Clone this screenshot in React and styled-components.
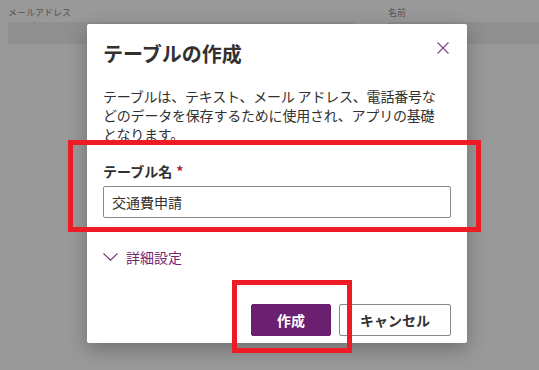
import styled, { createGlobalStyle } from 'styled-components';

const GlobalStyle = createGlobalStyle`
    * {
        box-sizing: border-box;
    }
    body {
        margin: 0;
        background: #999999;
        font-family: 'Noto Sans CJK JP', 'Noto Sans', sans-serif;
    }
`;

const Page = styled.div`
    position: relative;
    width: 539px;
    height: 370px;
    overflow: hidden;
    background: #999999;
`;

const Table = styled.div`
    display: grid;
    grid-template-columns: 346px 1fr;
    column-gap: 34px;
    padding-left: 8px;
`;

const HeaderCell = styled.div`
    height: 22px;
    font-size: 9px;
    line-height: 26px;
    color: #555555;
`;

const BandCell = styled.div`
    height: 22px;
    background: #8f8f8f;
`;

const Dialog = styled.div`
    position: absolute;
    left: 87px;
    top: 24px;
    width: 380px;
    height: 319px;
    display: flex;
    flex-direction: column;
    padding: 16px 16px 7px;
    background: #ffffff;
    border-radius: 2px;
    box-shadow: 0 6px 20px rgba(0, 0, 0, 0.28);
    color: #323130;
`;

const DialogHeader = styled.div`
    display: flex;
    justify-content: space-between;
    align-items: flex-start;
`;

const Title = styled.h1`
    margin: 0;
    font-size: 20px;
    line-height: 28px;
    font-weight: 700;
    color: #323130;
`;

const CloseButton = styled.button`
    display: flex;
    align-items: center;
    justify-content: center;
    width: 24px;
    height: 24px;
    margin: -4px -4px 0 0;
    padding: 0;
    border: none;
    background: none;
    color: #8a3b98;
`;

const Description = styled.p`
    margin: 19px 0 0;
    font-size: 14px;
    letter-spacing: -0.2px;
    line-height: 19px;
    white-space: nowrap;
    color: #323130;
`;

const Label = styled.label`
    display: block;
    margin-top: 17px;
    font-size: 14px;
    line-height: 20px;
    font-weight: 700;
    color: #323130;
`;

const Required = styled.span`
    margin-left: 4px;
    color: #a4262c;
`;

const TextInput = styled.input`
    display: block;
    width: 100%;
    height: 32px;
    margin-top: 5px;
    padding: 0 8px;
    border: 1px solid #8a8886;
    border-radius: 2px;
    font-family: inherit;
    font-size: 14px;
    color: #323130;
    outline: none;
`;

const Advanced = styled.button`
    display: flex;
    align-items: center;
    gap: 8px;
    margin-top: 29px;
    padding: 0;
    height: 20px;
    border: none;
    background: none;
    font-family: inherit;
    font-size: 14px;
    color: #742774;
    align-self: flex-start;
`;

const Footer = styled.div`
    margin-top: auto;
    display: flex;
    justify-content: flex-end;
    gap: 8px;
`;

const Button = styled.button`
    height: 32px;
    min-width: ${(p) => (p.$primary ? '80px' : '112px')};
    padding: 0 16px;
    border: 1px solid ${(p) => (p.$primary ? '#6a1f71' : '#8a8886')};
    border-radius: 2px;
    background: ${(p) => (p.$primary ? '#6a1f71' : '#ffffff')};
    color: ${(p) => (p.$primary ? '#ffffff' : '#323130')};
    font-family: inherit;
    font-size: 14px;
    font-weight: 700;
`;

const Annotation = styled.div`
    position: absolute;
    left: ${(p) => p.$x}px;
    top: ${(p) => p.$y}px;
    width: ${(p) => p.$w}px;
    height: ${(p) => p.$h}px;
    border: 5px solid #ed1c24;
    pointer-events: none;
`;

export default function App() {
    return (
        <Page>
            <GlobalStyle />
            <Table>
                <HeaderCell>メールアドレス</HeaderCell>
                <HeaderCell>名前</HeaderCell>
                <BandCell />
                <BandCell />
            </Table>

            <Dialog>
                <DialogHeader>
                    <Title>テーブルの作成</Title>
                    <CloseButton aria-label="閉じる">
                        <svg width="12" height="12" viewBox="0 0 12 12">
                            <path d="M0.5 0.5L11.5 11.5M11.5 0.5L0.5 11.5" stroke="currentColor" strokeWidth="1.1" fill="none" />
                        </svg>
                    </CloseButton>
                </DialogHeader>
                <Description>
                    テーブルは、テキスト、メール アドレス、電話番号な
                    <br />
                    どのデータを保存するために使用され、アプリの基礎
                    <br />
                    となります。
                </Description>
                <Label>
                    テーブル名<Required>*</Required>
                </Label>
                <TextInput defaultValue="交通費申請" />
                <Advanced>
                    <svg width="15" height="8" viewBox="0 0 15 8">
                        <path d="M0.5 0.5L7.5 7.2L14.5 0.5" stroke="currentColor" strokeWidth="1.1" fill="none" />
                    </svg>
                    詳細設定
                </Advanced>
                <Footer>
                    <Button $primary>作成</Button>
                    <Button>キャンセル</Button>
                </Footer>
            </Dialog>

            <Annotation $x={68} $y={140} $w={413} $h={92} />
            <Annotation $x={232} $y={280} $w={120} $h={73} />
        </Page>
    );
}
